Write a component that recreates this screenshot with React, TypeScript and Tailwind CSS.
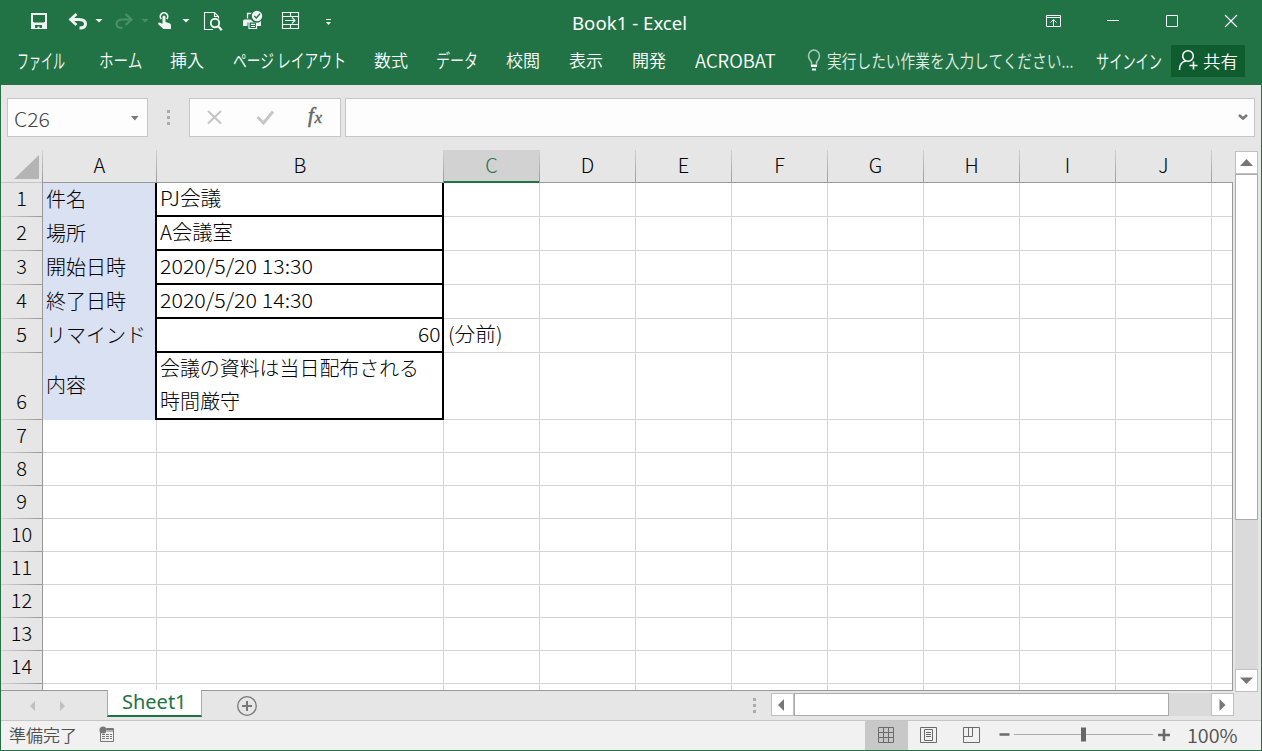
import { useLayoutEffect, useRef, useState } from 'react';
import type { ReactNode } from 'react';

interface LabelProps {
  width: number;
  children: ReactNode;
  className?: string;
}

// single line of text squeezed or stretched to a fixed width
const Label = ({ width, children, className = '' }: LabelProps) => {
  const ref = useRef<HTMLSpanElement>(null);
  const [scale, setScale] = useState(1);

  useLayoutEffect(() => {
    if (ref.current) setScale(width / ref.current.offsetWidth);
  }, [width]);

  return (
    <span className={`block shrink-0 whitespace-nowrap ${className}`} style={{ width }}>
      <span ref={ref} className="inline-block origin-left" style={{ transform: `scaleX(${scale})` }}>
        {children}
      </span>
    </span>
  );
};

const menuItems = [
  { title: 'ファイル', width: 48, className: 'ml-[17px] mt-px text-[20px]' },
  { title: 'ホーム', width: 43, className: 'ml-[34px] text-[19px]' },
  { title: '挿入', width: 34, className: 'ml-[28px]' },
  { title: 'ページ レイアウト', width: 113, className: 'ml-[29px] text-[19px]' },
  { title: '数式', width: 34, className: 'ml-[28px]' },
  { title: 'データ', width: 42, className: 'ml-[28px] text-[19px]' },
  { title: '校閲', width: 34, className: 'ml-[28px]' },
  { title: '表示', width: 34, className: 'ml-[29px]' },
  { title: '開発', width: 34, className: 'ml-[29px]' },
  { title: 'ACROBAT', width: 81, className: 'ml-[29px] text-[18px]' },
];

const columns = ['A', 'B', 'C', 'D', 'E', 'F', 'G', 'H', 'I', 'J'];

interface Entry {
  name: string;
  nameWidth: number;
  value: string[];
  valueWidth: number[];
  note?: string;
}

const entries: Entry[] = [
  { name: '件名', nameWidth: 40, value: ['PJ会議'], valueWidth: [61] },
  { name: '場所', nameWidth: 40, value: ['A会議室'], valueWidth: [73] },
  { name: '開始日時', nameWidth: 80, value: ['2020/5/20 13:30'], valueWidth: [153] },
  { name: '終了日時', nameWidth: 80, value: ['2020/5/20 14:30'], valueWidth: [153] },
  { name: 'リマインド', nameWidth: 100, value: ['60'], valueWidth: [22], note: '(分前)' },
  { name: '内容', nameWidth: 40, value: ['会議の資料は当日配布される', '時間厳守'], valueWidth: [259, 80] },
];

const emptyRows = [7, 8, 9, 10, 11, 12, 13, 14];

const QuickAccess = () => (
  <svg width="360" height="42" className="shrink-0" fill="none" stroke="#f0f3f1" aria-hidden="true">
    {/* save */}
    <path d="M32 14h14v14H32z" strokeWidth="2" />
    <path d="M31 22h3v7h-3zM44 22h3v7h-3zM33 22.500h12v6.500H33z" fill="#f0f3f1" stroke="none" />
    <path d="M35 25h7v3h-2.500v-1.500h-2V28H35z" fill="#217346" stroke="none" />
    {/* undo */}
    <path d="M71 19.500h8c4 0 6.500 1.800 6.500 4.500s-2.500 4-6 4" strokeWidth="3" />
    <path d="M76.500 14l-6 5.500 6 5.500" strokeWidth="2.700" />
    <path d="M95.500 19h7l-3.500 3.500z" fill="#f0f3f1" stroke="none" />
    {/* redo */}
    <g stroke="#4d8f6b">
      <path d="M131 19.500h-8c-4 0-6.500 1.800-6.500 4.500s2.500 4 6 4" strokeWidth="2.200" />
      <path d="M125.500 14l6 5.500-6 5.500" strokeWidth="2.200" />
    </g>
    <path d="M141.500 19h7l-3.500 3.500z" fill="#4d8f6b" stroke="none" />
    {/* touch mode */}
    <path d="M161.300 19a3.700 3.700 0 1 1 5.400 0" strokeWidth="1.700" />
    <path d="M162.500 16.500q1.500-1.800 3 0v5.500l4 1.200q1.500.6 1.500 2v3.800h-7.500l-5.500-5q.5-2 2-1.300l2.500 1z" fill="#f0f3f1" stroke="none" />
    <path d="M182.500 19h7l-3.500 3.500z" fill="#f0f3f1" stroke="none" />
    {/* print preview */}
    <path d="M213 29.500h-8.500v-17h10l4 4v2M214.500 12.500v4h4" strokeWidth="1.100" />
    <circle cx="215" cy="23" r="4.200" strokeWidth="1.900" />
    <path d="M218 26l3.800 4.300" strokeWidth="2.200" />
    {/* quick print */}
    <path d="M243 21q0-1.500 1.500-1.500h14.500q2 0 2 1.500v5h-4v-3.500h-9.500V26h-4.500z" fill="#f0f3f1" stroke="none" />
    <path d="M253 13.500h-5.500v5" strokeWidth="1.300" />
    <path d="M249 22h7.500v6.500H249zM251 24.300h4M251 26.500h4" fill="#217346" strokeWidth="1.200" />
    <circle cx="256.500" cy="16.500" r="6.300" fill="#217346" stroke="none" />
    <circle cx="257" cy="16" r="5.200" fill="#f0f3f1" stroke="none" />
    <path d="M254.300 16l2 2 3.700-4.200" stroke="#217346" strokeWidth="1.300" />
    {/* form */}
    <path d="M282.500 12.500h16v16h-16zM282.500 16.500h16M282.500 24.500h16M290.500 12.500v4M290.500 24.500v4M285 20.500h10M292 17.500l3 3-3 3" strokeWidth="1.100" />
    {/* customise */}
    <path d="M326 19.500h5" />
    <path d="M326 22h5l-2.500 3z" fill="#f0f3f1" stroke="none" />
  </svg>
);

const TitleBar = () => (
  <div className="flex h-[42px]">
    <QuickAccess />
    <div className="flex flex-1 justify-start pl-[212px] pt-[9px] text-[18px] leading-[28px]">
      <Label width={115} className="font-['Noto_Sans'] font-normal">Book1 - Excel</Label>
    </div>
    <svg width="222" height="42" className="shrink-0" fill="none" stroke="#fff" aria-hidden="true">
      <path d="M6.500 15.500h14v11h-14zM6.500 17.500h14M13.500 26v-6M10.500 22.500l3-3 3 3" />
      <path d="M67 20.500h12" />
      <path d="M126.500 15.500h11v11h-11z" />
      <path d="M185 15l12 12M197 15l-12 12" strokeWidth="1.200" />
    </svg>
  </div>
);

const MenuBar = () => (
  <nav className="flex h-[43px] pt-[2px] text-[17px] font-[350] leading-[32px]">
    {menuItems.map((item) => (
      <Label key={item.title} width={item.width} className={item.className}>
        {item.title}
      </Label>
    ))}
    <svg width="18" height="26" className="ml-[28px] mt-[5px] shrink-0" fill="none" stroke="#a9cbb7" strokeWidth="1.500" aria-hidden="true">
      <path d="M7.500 16v-3c-1.500-1.800-3-3-3-6a5.500 6 0 0 1 11 0c0 3-1.500 4.200-3 6v3z" />
      <path d="M7 17h6M8 20.500h4" stroke="#fff" strokeWidth="2" />
    </svg>
    <Label width={246} className="ml-[5px] text-[18px] text-[#e0eee6]">実行したい作業を入力してください...</Label>
    <Label width={66} className="ml-[23px] mt-px text-[19px]">サインイン</Label>
    <button className="ml-[9px] mt-px flex h-8 w-[74px] shrink-0 bg-[#0f5c2e]">
      <svg width="24" height="26" className="ml-[5px] mt-[3px]" fill="none" stroke="#fff" strokeWidth="1.600" aria-hidden="true">
        <circle cx="12" cy="8" r="5.300" />
        <path d="M3.500 22c0-6 2.500-8.500 6.500-9M13.500 17.500h8M17.500 13.500v8" />
      </svg>
      <Label width={35} className="ml-[3px] text-left">共有</Label>
    </button>
  </nav>
);

const Dots = ({ className }: { className: string }) => (
  <div className={`flex w-[3px] shrink-0 flex-col gap-[3px] ${className}`}>
    <i className="h-[3px] bg-[#ababab]" />
    <i className="h-[3px] bg-[#ababab]" />
    <i className="h-[3px] bg-[#ababab]" />
  </div>
);

const FormulaBar = () => (
  <div className="flex h-[65px] pl-1.5 pt-[13px]">
    <div className="flex h-[39px] w-[141px] shrink-0 justify-between border border-[#c6c6c6] bg-[#fdfdfd] pl-[6px] pr-[8px] text-[20px] leading-[40px] text-[#444]">
      <Label width={36}>C26</Label>
      <svg width="8" height="5" className="mt-[17px]" aria-hidden="true">
        <path d="M0 0h7.500L3.800 4.500z" fill="#777" />
      </svg>
    </div>
    <Dots className="ml-[19px] mt-[12px]" />
    <div className="ml-[19px] h-[39px] w-[152px] shrink-0 border border-[#c6c6c6] bg-[#fdfdfd]">
      <svg width="150" height="37" fill="none" aria-hidden="true">
        <path d="M18 12l13 12.500M31 12L18 24.500" stroke="#c6c6c6" strokeWidth="2.200" />
        <path d="M67.500 18l6 6 9.500-11.500" stroke="#c6c6c6" strokeWidth="3" />
        <text x="118" y="23" fill="#666" stroke="#666" strokeWidth="0.500" fontSize="21" fontStyle="italic" fontFamily="Liberation Serif, serif">f</text>
        <text x="124.500" y="24" fill="#666" stroke="#666" strokeWidth="0.400" fontSize="17" fontStyle="italic" fontFamily="Liberation Serif, serif">x</text>
      </svg>
    </div>
    <div className="ml-1 flex h-[39px] w-[910px] shrink-0 justify-end border border-[#c6c6c6] bg-[#fdfdfd]">
      <svg width="10" height="7" className="mr-[6px] mt-[15px]" fill="none" aria-hidden="true">
        <path d="M1 1l4 3.500L9 1" stroke="#777" strokeWidth="2.500" />
      </svg>
    </div>
  </div>
);

const ColumnHeaders = () => (
  <div className="flex h-[33px] text-[20px] leading-[30px] text-black">
    <div className="flex w-[42px] shrink-0">
      <svg width="41" height="33" aria-hidden="true">
        <path d="M38 5v24H13z" fill="#b4b4b4" />
        <path d="M0 32.500h41" stroke="#c6c6c6" />
      </svg>
      <div className="w-px bg-linear-to-b from-[#d4d4d4] to-[#999]" />
    </div>
    {columns.map((col) => (
      <div
        key={col}
        className={`flex shrink-0 ${col === 'A' ? 'w-[114px]' : col === 'B' ? 'w-[287px]' : 'w-24'}`}
      >
        <div
          className={`flex-1 text-center ${
            col === 'C' ? 'border-b-2 border-[#217346] bg-[#d2d2d2] text-[#217346]' : 'border-b border-[#999]'
          }`}
        >
          {col}
        </div>
        <div className="w-px bg-linear-to-b from-[#d0d0d0] to-[#999]" />
      </div>
    ))}
    <div className="w-[21px] border-b border-[#999]" />
  </div>
);

const RowHeader = ({ row, className }: { row: number; className: string }) => (
  <div className="flex w-[42px] shrink-0 flex-col justify-end border-r border-[#999] text-center text-[20px]">
    <div className={`shrink-0 ${className}`}>{row}</div>
    <div className="h-px shrink-0 bg-linear-to-r from-[#d4d4d4] to-[#999]" />
  </div>
);

const EmptyCells = ({ first }: { first?: ReactNode }) => (
  <>
    {columns.slice(2).map((col, i) => (
      <div key={col} className="w-24 shrink-0 border-b border-r border-[#d4d4d4] bg-white pl-[4px] leading-[30px]">
        {i === 0 && first}
      </div>
    ))}
    <div className="flex-1 border-b border-[#d4d4d4] bg-white" />
  </>
);

const Sheet = () => (
  <div className="h-[541px] w-[1232px]">
    <ColumnHeaders />
    <div className="h-[508px] overflow-hidden border-b border-r border-[#999] leading-[32px] text-black">
      {entries.map((entry, i) => (
        <div key={entry.name} className={`flex text-[20px] ${i === 5 ? 'h-[67px]' : 'h-[34px]'}`}>
          <RowHeader row={i + 1} className="h-[34px]" />
          <div className="flex w-28 shrink-0 items-center bg-[#d9e1f2] pb-[3px] pl-[3px]">
            <Label width={entry.nameWidth}>{entry.name}</Label>
          </div>
          <div
            className={`flex w-[289px] shrink-0 flex-col border-x-2 border-b-2 border-black bg-white pl-[3px] pr-[2px] ${
              entry.note ? 'items-end' : 'items-start'
            }`}
          >
            {entry.value.map((line, n) => (
              <Label key={line} width={entry.valueWidth[n]} className={n === 1 ? 'h-8 leading-[32px]' : 'h-8 leading-[30px]'}>
                {line}
              </Label>
            ))}
          </div>
          <EmptyCells first={entry.note && <Label width={55}>{entry.note}</Label>} />
        </div>
      ))}
      {emptyRows.map((row) => (
        <div key={row} className="flex h-[33px]">
          <RowHeader row={row} className="h-[33px]" />
          <div className="w-[114px] shrink-0 border-b border-r border-[#d4d4d4] bg-white" />
          <div className="w-[287px] shrink-0 border-b border-r border-[#d4d4d4] bg-white" />
          <EmptyCells />
        </div>
      ))}
      {/* row 15 is cut off by the tab strip */}
      <div className="flex h-[6px]">
        <div className="w-[42px] shrink-0 border-r border-[#999]" />
        <div className="w-[114px] shrink-0 border-r border-[#d4d4d4] bg-white" />
        <div className="w-[287px] shrink-0 border-r border-[#d4d4d4] bg-white" />
        {columns.slice(2).map((col) => (
          <div key={col} className="w-24 shrink-0 border-r border-[#d4d4d4] bg-white" />
        ))}
        <div className="flex-1 bg-white" />
      </div>
    </div>
  </div>
);

const ScrollColumn = () => (
  <div className="ml-[2px] mt-px flex h-[541px] w-[23px] flex-col bg-[#dadada]">
    <div className="h-[23px] border border-[#c0c0c0] bg-white">
      <svg width="21" height="21" aria-hidden="true">
        <path d="M4 14h13L10.500 7z" fill="#777" />
      </svg>
    </div>
    <div className="h-[346px] border border-[#ababab] bg-white" />
    <div className="mt-auto h-[23px] border border-[#c0c0c0] bg-white">
      <svg width="21" height="21" aria-hidden="true">
        <path d="M4 7.500h13L10.500 14z" fill="#777" />
      </svg>
    </div>
  </div>
);

const TabStrip = () => (
  <div className="flex h-[29px]">
    <svg width="106" height="29" className="shrink-0" fill="#c0c0c0" aria-hidden="true">
      <path d="M34 10v10l-5-5zM59 10v10l5-5z" />
    </svg>
    <div className="relative -top-px flex h-[27px] w-[95px] shrink-0 border-x border-b-2 border-x-[#ababab] border-b-[#217346] bg-white pl-[14px] font-['Noto_Sans'] text-[20px] font-normal leading-[24px] text-[#217346]">
      <Label width={65}>Sheet1</Label>
    </div>
    <svg width="24" height="24" className="ml-[34px] mt-[4px] shrink-0" fill="none" stroke="#777" aria-hidden="true">
      <circle cx="11" cy="11" r="9.300" strokeWidth="1.300" />
      <path d="M6 11h10M11 6v10" strokeWidth="2" />
    </svg>
    <Dots className="ml-[493px] mt-[7px]" />
    <div className="ml-[15px] mt-[2px] flex h-[23px] w-[463px] shrink-0 bg-[#dadada]">
      <div className="w-[23px] border border-[#c0c0c0] bg-white">
        <svg width="21" height="21" aria-hidden="true">
          <path d="M12 5v12l-6-6z" fill="#777" />
        </svg>
      </div>
      <div className="w-[375px] border border-[#ababab] bg-white" />
      <div className="ml-auto w-[23px] border border-[#c0c0c0] bg-white">
        <svg width="21" height="21" aria-hidden="true">
          <path d="M7.500 5v12l6-6z" fill="#777" />
        </svg>
      </div>
    </div>
  </div>
);

const StatusBar = () => (
  <footer className="flex h-[30px] border-t border-[#c6c6c6] bg-[#f1f1f1] text-[17px] font-[350] leading-[28px] text-[#505050]">
    <Label width={68} className="ml-[8px]">準備完了</Label>
    <svg width="18" height="18" className="ml-[22px] mt-[5px]" fill="none" stroke="#777" aria-hidden="true">
      <path d="M1.500 6v9.500h13v-13h-7" />
      <path d="M7 3.500h8M8 5h7" />
      <path d="M3 8.500h10M3 10.500h10M3 12.500h10" strokeDasharray="3 1" />
      <circle cx="4" cy="4" r="3.500" fill="#777" stroke="none" />
    </svg>
    <svg width="307" height="29" className="ml-auto" fill="none" stroke="#6a6a6a" aria-hidden="true">
      <path d="M0 0h43v29H0z" fill="#c8c8c8" stroke="none" />
      <path d="M13.500 6.500h15v15h-15zM13.500 11.500h15M13.500 16.500h15M18.500 6.500v15M23.500 6.500v15" />
      <path d="M55.500 6.500h16v15h-16zM59.500 8.500h8v11h-8zM61 11.500h5M61 13.500h5M61 15.500h5" />
      <path d="M98.500 6.500h16v15h-16zM98.500 15.500h9v-9M103.500 6.500v9" />
      <path d="M134.500 13.500h10" strokeWidth="2.500" />
      <path d="M149 13.500h139" stroke="#ababab" />
      <path d="M216 6.500h5v14h-5z" fill="#666" stroke="none" />
      <path d="M293 14h12M299 8v12" strokeWidth="2.500" />
    </svg>
    <Label width={51} className="ml-[15px] mr-[23px] text-[19px]">100%</Label>
  </footer>
);

const App = () => {
  return (
    <div className="h-[751px] w-[1262px] overflow-hidden bg-[#e6e6e6] font-['Noto_Sans_CJK_JP',sans-serif] font-light">
      <header className="h-[85px] bg-[#217346] text-white">
        <TitleBar />
        <MenuBar />
      </header>
      <main className="h-[666px] border-x border-b border-[#217346]">
        <FormulaBar />
        <div className="flex h-[541px]">
          <Sheet />
          <ScrollColumn />
        </div>
        <TabStrip />
        <StatusBar />
      </main>
    </div>
  );
};

export default App;
